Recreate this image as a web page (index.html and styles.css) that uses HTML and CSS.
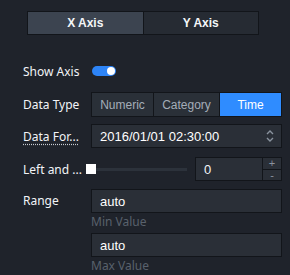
FILE: index.html
```html
<!DOCTYPE html>
<html lang="en">
<head>
    <title>Axis Settings</title>
    <link rel="stylesheet" href="styles.css">
</head>
<body>
    <div class="panel">
        <div class="tabs">
            <div class="tab active">X Axis</div>
            <div class="tab">Y Axis</div>
        </div>
        <div class="form">
            <div class="row row-switch">
                <span class="label">Show Axis</span>
                <span class="switch"><span class="knob"></span></span>
            </div>
            <div class="row row-type">
                <span class="label">Data Type</span>
                <div class="segments">
                    <div class="seg">Numeric</div>
                    <div class="seg">Category</div>
                    <div class="seg on">Time</div>
                </div>
            </div>
            <div class="row row-format">
                <span class="label dotted">Data For...</span>
                <div class="input">
                    <span>2016/01/01 02:30:00</span>
                    <svg class="spin" width="8" height="14" viewBox="0 0 8 14">
                        <path d="M1 5 L4 2 L7 5" fill="none" stroke="#8a939e" stroke-width="1.4"/>
                        <path d="M1 9 L4 12 L7 9" fill="none" stroke="#8a939e" stroke-width="1.4"/>
                    </svg>
                </div>
            </div>
            <div class="row row-slider">
                <span class="label">Left and ...</span>
                <div class="slider-wrap">
                    <div class="slider"><span class="handle"></span></div>
                    <div class="number">
                        <span class="num-val">0</span>
                        <div class="steps">
                            <span>+</span>
                            <span>-</span>
                        </div>
                    </div>
                </div>
            </div>
            <div class="row row-range">
                <span class="label">Range</span>
                <div class="range">
                    <div class="input">auto</div>
                    <div class="hint">Min Value</div>
                    <div class="input">auto</div>
                    <div class="hint">Max Value</div>
                </div>
            </div>
        </div>
    </div>
</body>
</html>
```

FILE: styles.css
```css
body {
    margin: 0;
    background-color: #1f232b;
    color: #f2f4f7;
    font-family: "Liberation Sans", Arial, sans-serif;
    font-size: 12px;
}
.panel {
    width: 290px;
    height: 275px;
    padding-top: 11px;
    box-sizing: border-box;
}
.tabs {
    display: flex;
    width: 232px;
    height: 24px;
    margin-left: 27px;
    border: 1px solid #12151a;
    box-sizing: border-box;
}
.tab {
    flex: 1;
    display: flex;
    align-items: center;
    justify-content: center;
    background-color: #262b33;
    font-weight: bold;
    font-size: 12px;
    color: #f4f6f8;
}
.tab.active {
    background-color: #3c4450;
    border-right: 1px solid #12151a;
}
.form {
    padding: 0 8px 0 23px;
    margin-top: 28px;
    display: flex;
    flex-direction: column;
}
.row {
    display: flex;
    align-items: center;
}
.row-switch {
    height: 16px;
}
.row-type {
    margin-top: 13px;
}
.row-format {
    margin-top: 7px;
}
.row-slider {
    margin-top: 9px;
}
.row-range {
    margin-top: 8px;
    align-items: flex-start;
}
.label {
    width: 68px;
    flex-shrink: 0;
    font-family: "Noto Sans", sans-serif;
    font-size: 12px;
    color: #f2f4f7;
    white-space: nowrap;
}
.row-range .label {
    margin-top: 3px;
}
.dotted {
    text-decoration: underline dotted #c8ccd2;
    text-underline-offset: 3px;
}
.switch {
    position: relative;
    width: 24px;
    height: 10px;
    border-radius: 5px;
    background-color: #2d84f7;
    margin-left: 1px;
}
.knob {
    position: absolute;
    right: 1px;
    top: 1px;
    width: 8px;
    height: 8px;
    border-radius: 50%;
    background-color: #fff;
}
.segments {
    display: flex;
    flex: 1;
    height: 25px;
    border: 1px solid #12151a;
    box-sizing: border-box;
}
.seg {
    display: flex;
    align-items: center;
    justify-content: center;
    background-color: #2a3038;
    color: #a4adb8;
    border-right: 1px solid #12151a;
}
.seg:nth-child(1) {
    width: 61px;
}
.seg:nth-child(2) {
    width: 65px;
}
.seg.on {
    flex: 1;
    border-right: none;
    background-color: #2f8cff;
    color: #fff;
}
.input {
    display: flex;
    align-items: center;
    justify-content: space-between;
    flex: 1;
    height: 24px;
    padding: 0 7px 0 8px;
    background-color: #2a2f37;
    border: 1px solid #12151a;
    box-sizing: border-box;
    font-size: 13px;
    color: #fff;
}
.range .input {
    flex: none;
}
.slider-wrap {
    display: flex;
    align-items: center;
    flex: 1;
    margin-left: -5px;
}
.slider {
    position: relative;
    flex: 1;
    height: 3px;
    background-color: #2c323b;
    margin-right: 8px;
}
.handle {
    position: absolute;
    left: 0;
    top: -4px;
    width: 10px;
    height: 10px;
    background-color: #fff;
}
.number {
    display: flex;
    width: 87px;
    height: 24px;
    border: 1px solid #12151a;
    box-sizing: border-box;
    background-color: #2a2f37;
}
.num-val {
    flex: 1;
    display: flex;
    align-items: center;
    padding-left: 8px;
    font-size: 13px;
}
.steps {
    display: flex;
    flex-direction: column;
    width: 18px;
    border-left: 1px solid #12151a;
}
.steps span {
    flex: 1;
    display: flex;
    align-items: center;
    justify-content: center;
    color: #8a939e;
    font-size: 11px;
    line-height: 1;
}
.steps span:first-child {
    border-bottom: 1px solid #12151a;
}
.range {
    flex: 1;
    display: flex;
    flex-direction: column;
}
.hint {
    height: 20px;
    line-height: 18px;
    font-family: "Noto Sans", sans-serif;
    color: #59616c;
    font-size: 12px;
}
```
